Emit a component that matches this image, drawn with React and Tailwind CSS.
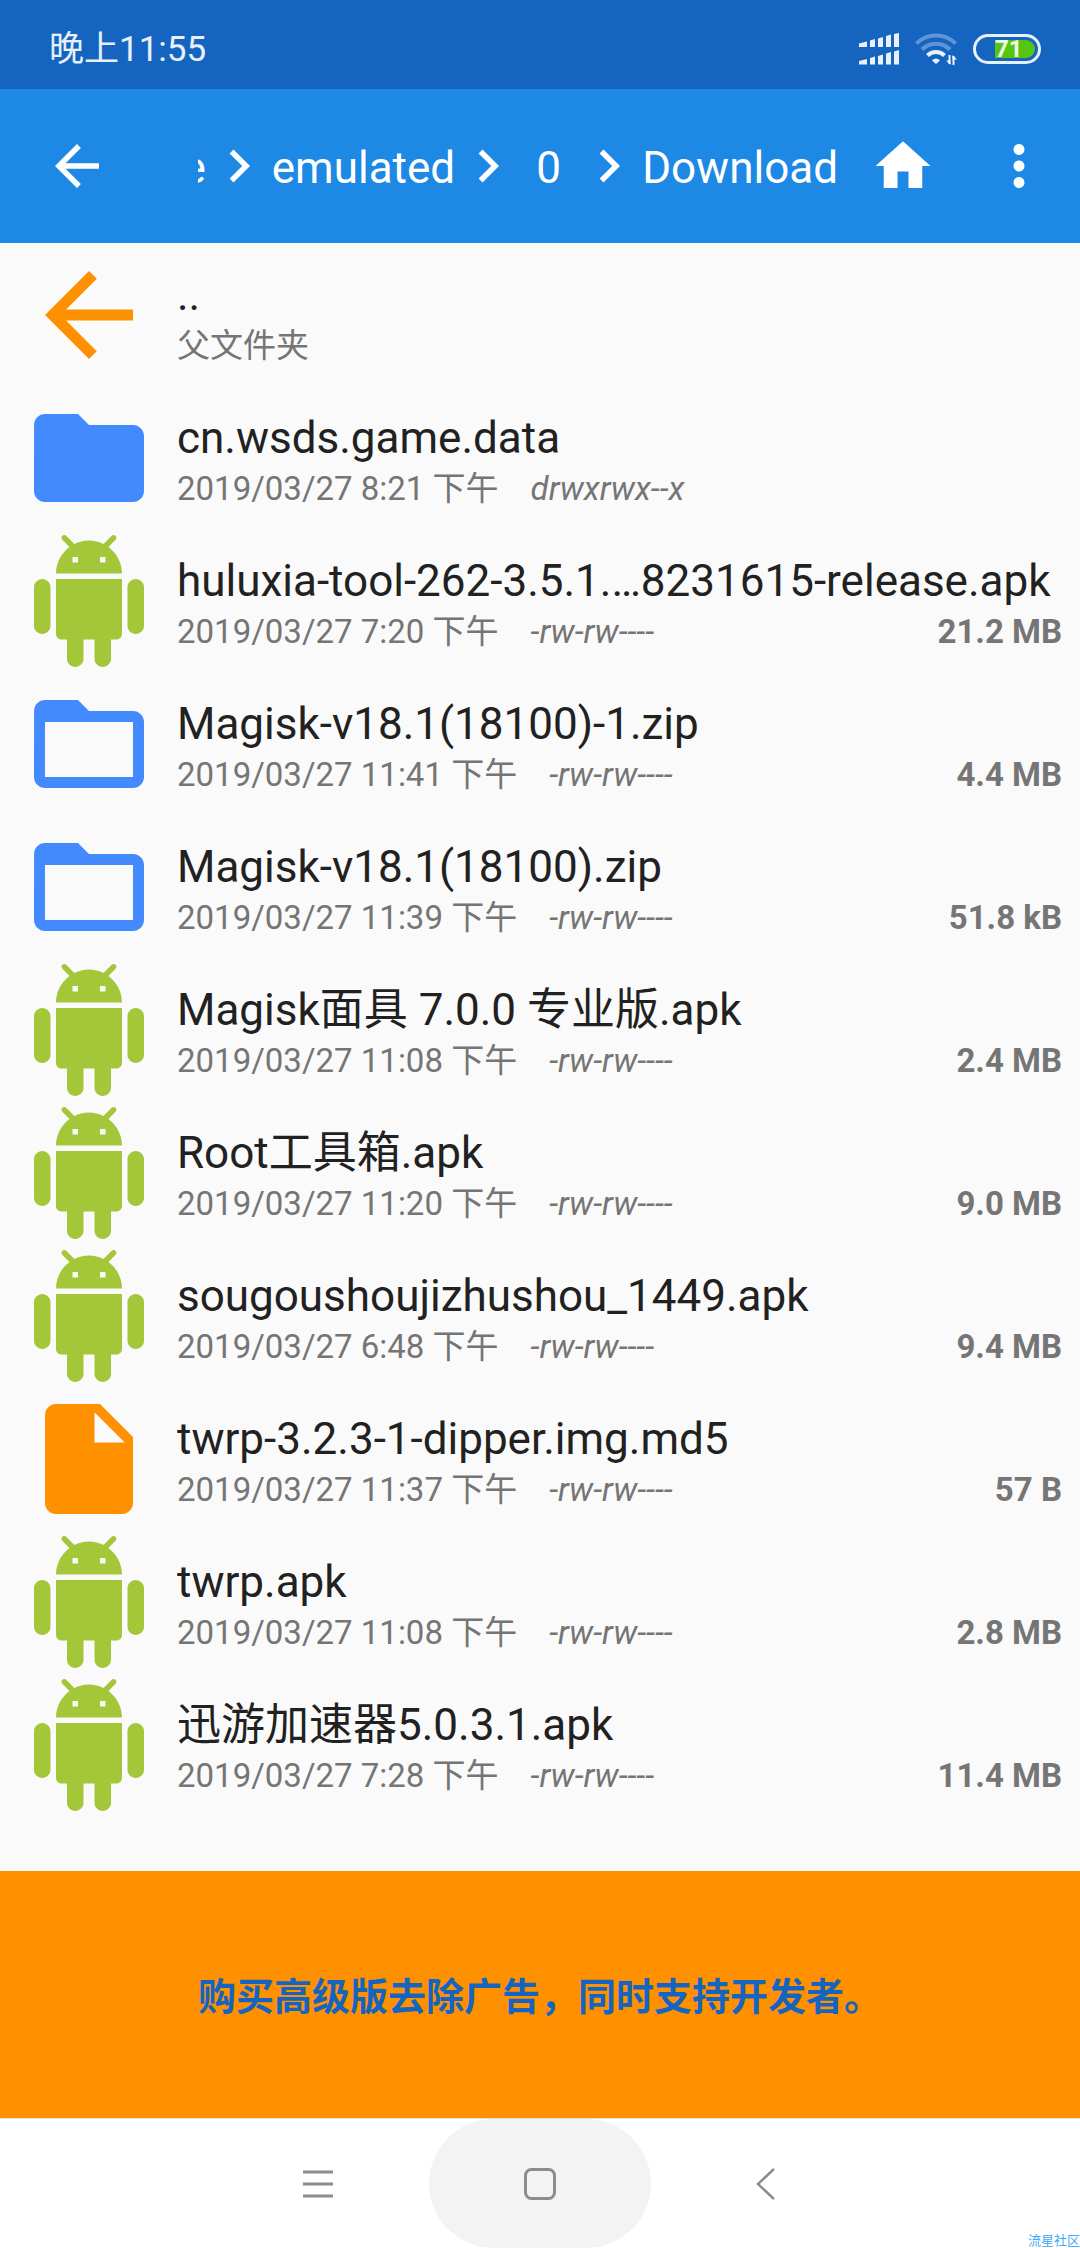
import { useState } from "react";
import {
  MdArrowBack,
  MdChevronRight,
  MdFolder,
  MdHome,
  MdMoreVert,
} from "react-icons/md";

const files = [
  { name: "cn.wsds.game.data", date: "2019/03/27 8:21 下午", perms: "drwxrwx--x", type: "folder" },
  { name: "huluxia-tool-262-3.5.1.…8231615-release.apk", date: "2019/03/27 7:20 下午", perms: "-rw-rw----", size: "21.2 MB", type: "apk" },
  { name: "Magisk-v18.1(18100)-1.zip", date: "2019/03/27 11:41 下午", perms: "-rw-rw----", size: "4.4 MB", type: "zip" },
  { name: "Magisk-v18.1(18100).zip", date: "2019/03/27 11:39 下午", perms: "-rw-rw----", size: "51.8 kB", type: "zip" },
  { name: "Magisk面具 7.0.0 专业版.apk", date: "2019/03/27 11:08 下午", perms: "-rw-rw----", size: "2.4 MB", type: "apk" },
  { name: "Root工具箱.apk", date: "2019/03/27 11:20 下午", perms: "-rw-rw----", size: "9.0 MB", type: "apk" },
  { name: "sougoushoujizhushou_1449.apk", date: "2019/03/27 6:48 下午", perms: "-rw-rw----", size: "9.4 MB", type: "apk" },
  { name: "twrp-3.2.3-1-dipper.img.md5", date: "2019/03/27 11:37 下午", perms: "-rw-rw----", size: "57 B", type: "file" },
  { name: "twrp.apk", date: "2019/03/27 11:08 下午", perms: "-rw-rw----", size: "2.8 MB", type: "apk" },
  { name: "迅游加速器5.0.3.1.apk", date: "2019/03/27 7:28 下午", perms: "-rw-rw----", size: "11.4 MB", type: "apk" },
];

const path = ["storage", "emulated", "0", "Download"];

function FileIcon({ type }) {
  if (type === "parent") {
    return <MdArrowBack className="size-33 shrink-0 text-[#ff9000]" />;
  }
  if (type === "folder") {
    return <MdFolder className="size-33 shrink-0 text-[#448aff]" />;
  }
  if (type === "zip") {
    return (
      <svg viewBox="0 0 24 24" fill="currentColor" className="size-33 shrink-0 text-[#448aff]">
        <path d="M20 6h-8l-2-2H4c-1.1 0-1.99.9-1.99 2L2 18c0 1.1.9 2 2 2h16c1.1 0 2-.9 2-2V8c0-1.1-.9-2-2-2zm0 12H4V8h16v10z" />
      </svg>
    );
  }
  if (type === "apk") {
    return (
      <svg viewBox="0 0 24 24" fill="currentColor" className="size-33 shrink-0 text-[#a4c639]">
        <path d="M6 18c0 .55.45 1 1 1h1v3.5c0 .83.67 1.5 1.5 1.5s1.5-.67 1.5-1.5V19h2v3.5c0 .83.67 1.5 1.5 1.5s1.5-.67 1.5-1.5V19h1c.55 0 1-.45 1-1V8H6v10zM3.5 8C2.67 8 2 8.67 2 9.5v7c0 .83.67 1.5 1.5 1.5S5 17.33 5 16.5v-7C5 8.67 4.33 8 3.5 8zm17 0c-.83 0-1.5.67-1.5 1.5v7c0 .83.67 1.5 1.5 1.5s1.5-.67 1.5-1.5v-7c0-.83-.67-1.5-1.5-1.5zm-4.97-5.84l1.3-1.3c.2-.2.2-.51 0-.71-.2-.2-.51-.2-.71 0l-1.48 1.48C13.85 1.23 12.95 1 12 1c-.96 0-1.86.23-2.66.63L7.85.15c-.2-.2-.51-.2-.71 0-.2.2-.2.51 0 .71l1.31 1.31C6.97 3.26 6 5.01 6 7h12c0-1.99-.97-3.75-2.47-4.84zM10 5H9V4h1v1zm5 0h-1V4h1v1z" />
      </svg>
    );
  }
  return (
    <svg viewBox="0 0 24 24" fill="currentColor" className="size-33 shrink-0 text-[#ff9000]">
      <path d="M6 2c-1.1 0-1.99.9-1.99 2L4 20c0 1.1.89 2 1.99 2H18c1.1 0 2-.9 2-2V8l-6-6H6zm7 7V3.5L18.5 9H13z" />
    </svg>
  );
}

function StatusBar() {
  return (
    <div className="flex h-[89px] items-center justify-between bg-[#1565c0] pt-2 pr-[39px] pl-[49px] text-white/90">
      <span className="pt-0.5 text-[35px] leading-[48px]">晚上11:55</span>

      <div className="flex items-center gap-4">
        {/* dual sim signal */}
        <svg viewBox="0 0 40 32" fill="currentColor" className="h-8 w-10">
          <path d="M0 10.5l8-2V14H0zM11 7.5l5-1.5v8h-5zM19 5.5L24 4v10h-5zM27 3l5-1.500V14h-5zM35 1l5-1v14h-5z" />
          <path d="M0 28l8-2v5.500H0zM11 25l5-1.500v8h-5zM19 23l5-1.500v10h-5zM27 20.500l5-1.500v12.500h-5zM35 18.500l5-1.500v14.500h-5z" />
        </svg>

        {/* wifi */}
        <svg viewBox="0 0 42 34" fill="none" stroke="currentColor" strokeWidth="4" className="h-[34px] w-[42px]">
          <g opacity="0.35">
            <path d="M1.500 11.500a28 28 0 0 1 39 0" />
            <path d="M7 17.500a20 20 0 0 1 28 0" />
          </g>
          <path d="M12.500 23.500a12 12 0 0 1 17 0" />
          <path d="M17 28.500q4-4 8 0L21 32z" fill="currentColor" stroke="none" />
          <path d="M34.500 23v9M38.500 33v-9" strokeWidth="2" />
          <path d="M31 28.500h4.500V33zM42 27.500h-4.500V23z" fill="currentColor" stroke="none" />
        </svg>

        {/* battery */}
        <div className="flex h-[30px] w-[68px] items-center justify-end rounded-full border-3 border-white/90 pr-[3px]">
          <div className="flex h-[18px] w-10 items-center rounded-r-full bg-[#56c512] text-[24px] leading-[18px] font-bold">
            71
          </div>
        </div>
      </div>
    </div>
  );
}

function Toolbar() {
  return (
    <header className="flex h-[154px] items-center bg-[#1e88e5] pr-7 pl-11 text-white">
      <button aria-label="Back" className="mr-22 shrink-0">
        <MdArrowBack className="size-[66px]" />
      </button>

      <nav className="flex min-w-0 flex-1 items-center justify-end overflow-hidden text-[44px] leading-[52px]">
        {path.map((part, i) => (
          <div key={part} className="flex shrink-0 items-center">
            {i > 0 && <MdChevronRight className="size-[66px]" />}
            <a href="#" className="min-w-[55px] pt-1 text-center">
              {part}
            </a>
          </div>
        ))}
      </nav>

      <button aria-label="Home" className="mr-[50px] ml-8 shrink-0">
        <MdHome className="size-[66px]" />
      </button>
      <button aria-label="More" className="shrink-0">
        <MdMoreVert className="size-[66px]" />
      </button>
    </header>
  );
}

function FileRow({ file, onClick }) {
  return (
    <li>
      <button onClick={onClick} className="flex w-full items-center gap-[22px] pr-[18px] pl-[23px] text-left">
        <FileIcon type={file.type} />
        <div className="min-w-0 flex-1 pt-[26px] pb-[15px]">
          <div className="truncate text-[44px] leading-[52px] text-[#212121]">{file.name}</div>
          <div className="flex text-[33px] leading-[50px] text-[#757575]">
            <span>{file.date}</span>
            {file.perms && <span className="ml-8 italic">{file.perms}</span>}
            {file.size && <span className="ml-auto font-bold">{file.size}</span>}
          </div>
        </div>
      </button>
    </li>
  );
}

function NavBar() {
  return (
    <div className="relative flex h-[130px] justify-center overflow-hidden border-t border-[#e0e0e0] bg-white text-[#8c8c8c]">
      <button aria-label="Menu" className="flex w-[222px] items-center justify-center">
        <svg viewBox="0 0 32 32" fill="none" stroke="currentColor" strokeWidth="3" className="size-8">
          <path d="M1 4h30M1 16h30M1 28h30" />
        </svg>
      </button>
      <button aria-label="Home" className="flex w-[222px] items-center justify-center rounded-full bg-[#f3f3f3]">
        <svg viewBox="0 0 32 32" fill="none" stroke="currentColor" strokeWidth="3" className="size-8">
          <rect x="1.500" y="1.500" width="29" height="29" rx="6" />
        </svg>
      </button>
      <button aria-label="Back" className="flex w-[222px] items-center justify-center">
        <svg viewBox="0 0 32 32" fill="none" stroke="currentColor" strokeWidth="2.500" className="size-8">
          <path d="M28 1L12 16l16 15" />
        </svg>
      </button>
      <span className="absolute right-0 bottom-0 text-[13px] leading-[14px] text-[#3fa9f5]">流星社区</span>
    </div>
  );
}

export default function App() {
  const [selected, setSelected] = useState(null);

  return (
    <div className="flex min-h-screen flex-col bg-[#fafafa] font-[Roboto,'Noto_Sans_CJK_SC',sans-serif]">
      <StatusBar />
      <Toolbar />

      <ul className="flex-1">
        <FileRow file={{ name: "..", date: "父文件夹", type: "parent" }} onClick={() => setSelected(null)} />
        {files.map((file) => (
          <FileRow
            key={file.name}
            file={file}
            onClick={() => setSelected(file.name === selected ? null : file.name)}
          />
        ))}
      </ul>

      {/* ad banner */}
      <a
        href="#"
        className="flex h-[247px] items-center justify-center bg-[#ff9000] px-11 pt-1 text-[38px] leading-[52px] font-bold text-[#1565c0]"
      >
        购买高级版去除广告，同时支持开发者。
      </a>

      <NavBar />
    </div>
  );
}
